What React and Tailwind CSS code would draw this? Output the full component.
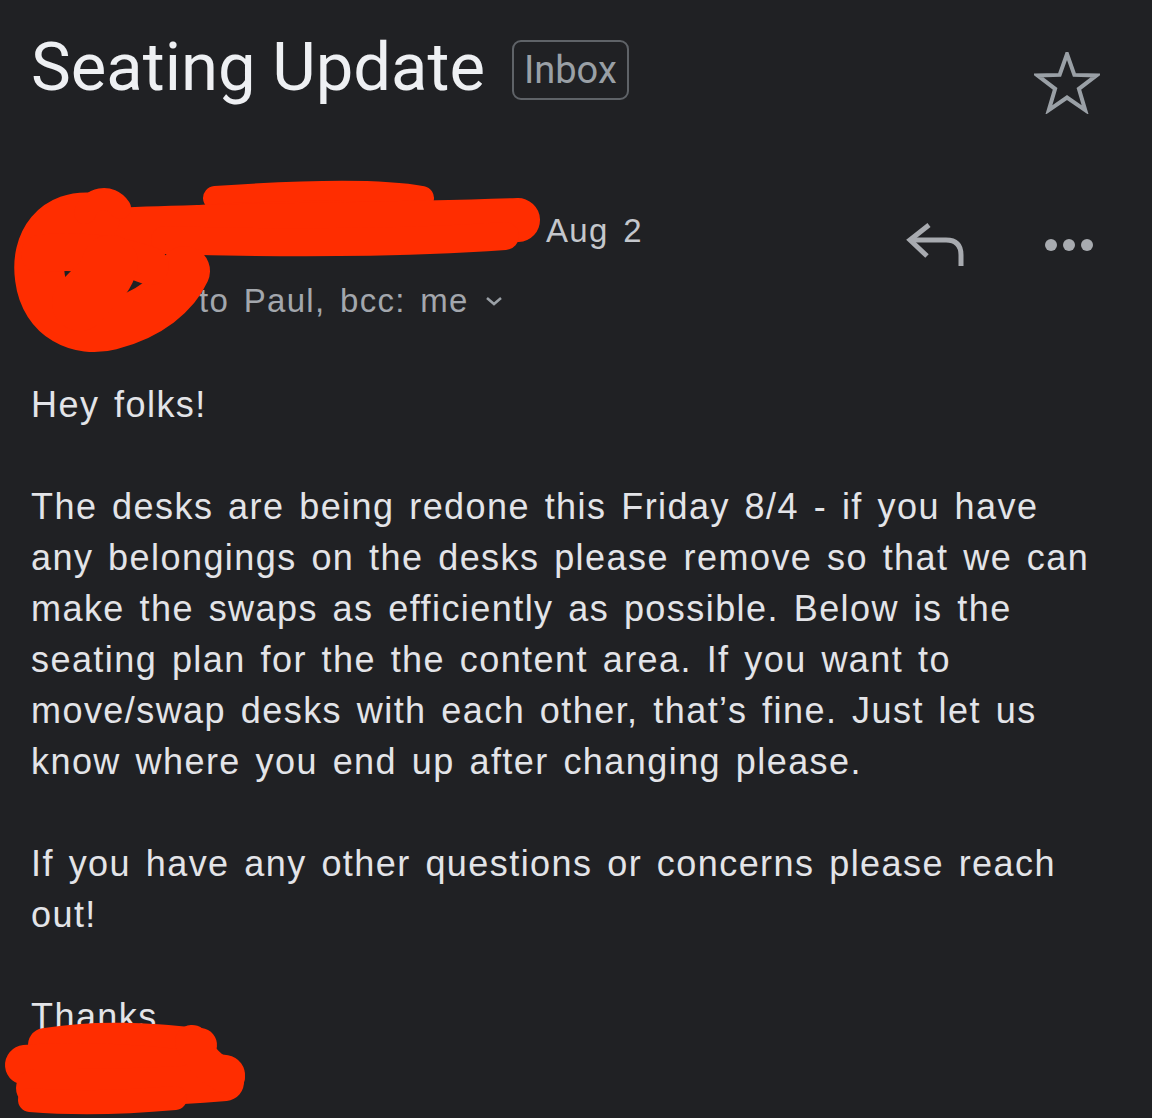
import React from 'react';

function Scribbles() {
  return (
    <svg
      className="absolute left-0 top-0 pointer-events-none"
      width="1152"
      height="1118"
      viewBox="0 0 1152 1118"
      fill="none"
    >
      <g stroke="#ff2d00" strokeLinecap="round" strokeLinejoin="round">
        {/* sender name + avatar */}
        <path d="M215 198 C300 192 380 190 422 198" strokeWidth="24" />
        <path d="M200 214 C260 210 340 208 400 212" strokeWidth="18" />
        <path d="M70 232 C200 224 350 226 518 220" strokeWidth="44" />
        <path d="M165 240 C300 244 420 242 505 236" strokeWidth="28" />
        <path d="M95 218 C55 213 35 243 40 278 C45 318 80 333 110 325 C150 315 175 293 185 271" strokeWidth="50" />
        <path d="M40 254 C70 249 120 254 150 266" strokeWidth="38" />
        <path d="M80 303 C90 288 105 283 110 263" strokeWidth="56" />
        <path d="M120 208 C110 193 90 198 85 213" strokeWidth="22" />
        {/* signature */}
        <path d="M45 1045 C100 1036 150 1040 200 1045" strokeWidth="34" />
        <path d="M25 1065 C80 1060 160 1065 225 1075" strokeWidth="40" />
        <path d="M35 1088 C90 1088 160 1088 225 1082" strokeWidth="38" />
        <path d="M30 1100 C80 1104 130 1102 175 1098" strokeWidth="24" />
        <path d="M192 1042 C202 1062 215 1072 228 1077" strokeWidth="34" />
      </g>
    </svg>
  );
}

function StarIcon() {
  return (
    <svg width="66" height="62" viewBox="-33 -33 66 62" fill="none">
      <polygon
        points="0,-31 7.35,-10.11 29.48,-9.58 11.89,3.86 18.22,25.08 0,12.5 -18.22,25.08 -11.89,3.86 -29.48,-9.58 -7.35,-10.11"
        stroke="#9aa0a6"
        strokeWidth="4"
        strokeLinejoin="miter"
      />
    </svg>
  );
}

function ReplyIcon() {
  return (
    <svg width="62" height="48" viewBox="0 0 62 48" fill="none">
      <path d="M25 5 L6 20 L23 36" stroke="#a8abb0" strokeWidth="5" />
      <path d="M6 20 H42 Q57 20 57 35 V46" stroke="#a8abb0" strokeWidth="5" />
    </svg>
  );
}

function DotsIcon() {
  return (
    <svg width="50" height="14" viewBox="0 0 50 14">
      <circle cx="7" cy="7" r="6" fill="#a8abb0" />
      <circle cx="25" cy="7" r="6" fill="#a8abb0" />
      <circle cx="43" cy="7" r="6" fill="#a8abb0" />
    </svg>
  );
}

function Chevron() {
  return (
    <svg width="18" height="12" viewBox="0 0 18 12" fill="none">
      <path d="M2 3 L9 9 L16 3" stroke="#9aa0a6" strokeWidth="2.5" />
    </svg>
  );
}

export default function App() {
  const body = 'text-[36px] leading-[51px] tracking-[0.04em] [word-spacing:3.3px] text-[#e3e4e8]';
  return (
    <div className="relative w-[1152px] h-[1118px] overflow-hidden bg-[#202124] font-[family-name:'Liberation_Sans',Arial,sans-serif]">
      {/* subject row */}
      <div className="flex items-start pl-[31px] pr-[52px] pt-[28px]">
        <h1 className="font-[family-name:Roboto,sans-serif] text-[67px] leading-[78px] font-normal text-[#eef0f3]">
          Seating Update
        </h1>
        <span className="ml-[27px] mt-[12px] flex h-[60px] items-center rounded-[9px] border-[2.5px] border-[#5f6368] px-[10px] font-[family-name:Roboto,sans-serif] text-[38px] leading-none text-[#9aa0a6]">
          Inbox
        </span>
        <div className="ml-auto mt-[24px]">
          <StarIcon />
        </div>
      </div>

      {/* sender block */}
      <div className="mt-[94px] flex items-start pl-[31px] pr-[58px]">
        <div className="w-[168px] shrink-0" />
        <div className="flex flex-col">
          <div className="flex items-center h-[46px]">
            <span className="w-[347px]" />
            <span className="text-[33px] tracking-[0.04em] [word-spacing:4px] text-[#c4c7cc]">Aug 2</span>
          </div>
          <div className="mt-[22px] flex items-center gap-[16px] text-[33px] tracking-[0.04em] [word-spacing:4px] text-[#a3a7ad]">
            <span>to Paul, bcc: me</span>
            <Chevron />
          </div>
        </div>
        <div className="ml-auto mt-[12px] flex items-start gap-[78px]">
          <ReplyIcon />
          <div className="mt-[18px]">
            <DotsIcon />
          </div>
        </div>
      </div>

      {/* message body */}
      <div className={`mt-[53px] pl-[31px] pr-[20px] ${body}`}>
        <p>Hey folks!</p>
        <p className="mt-[51px]">
          The desks are being redone this Friday 8/4 - if you have<br />
          any belongings on the desks please remove so that we can<br />
          make the swaps as efficiently as possible. Below is the<br />
          seating plan for the the content area. If you want to<br />
          move/swap desks with each other, that’s fine. Just let us<br />
          know where you end up after changing please.
        </p>
        <p className="mt-[51px]">
          If you have any other questions or concerns please reach<br />
          out!
        </p>
        <p className="mt-[51px]">
          Thanks,<br />
          <span className="text-transparent">Name</span>
        </p>
      </div>

      <Scribbles />
    </div>
  );
}
